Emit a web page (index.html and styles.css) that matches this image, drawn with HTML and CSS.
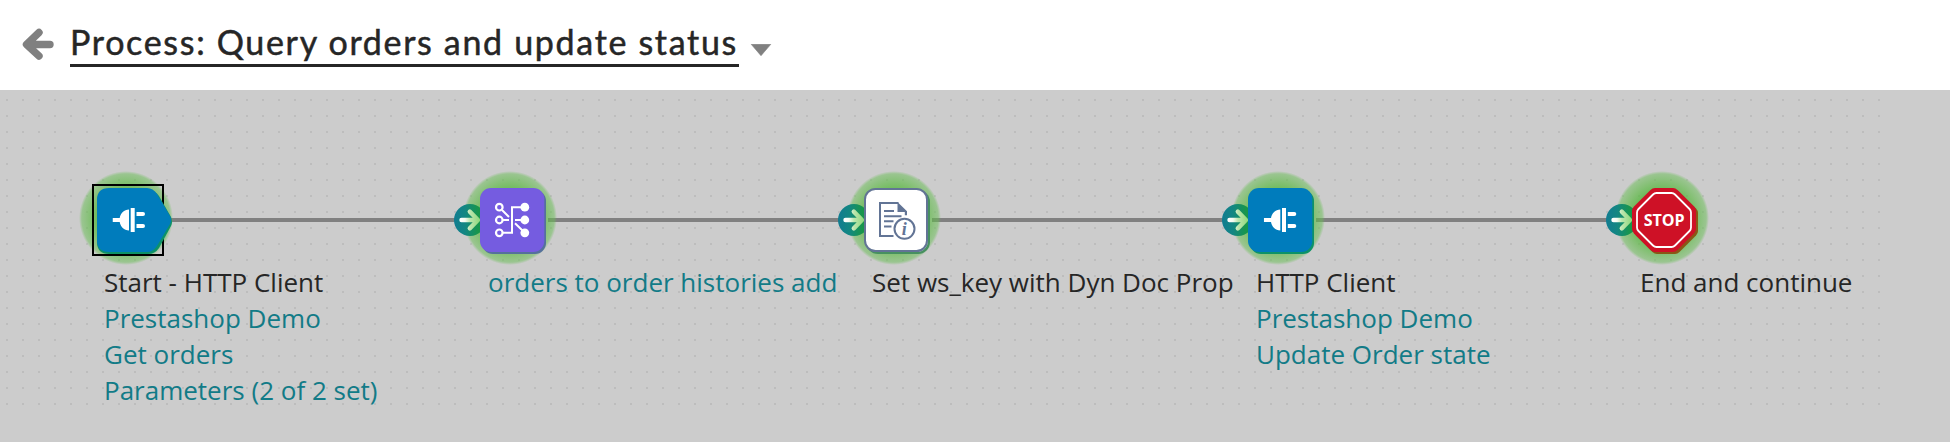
FILE: index.html
```html
<!DOCTYPE html>
<html lang="en">
<head>
<meta charset="utf-8">
<title>Process: Query orders and update status</title>
<link rel="stylesheet" href="styles.css">
</head>
<body>
<svg class="defs" width="0" height="0" aria-hidden="true">
  <defs>
    <linearGradient id="port-bg" x1="0" x2="1" y1="0" y2="0"><stop offset="0" stop-color="#117c91"/><stop offset=".35" stop-color="#138782"/><stop offset=".75" stop-color="#18964b"/><stop offset="1" stop-color="#18964b"/></linearGradient>
    <linearGradient id="port-arrow" gradientUnits="userSpaceOnUse" x1="6" x2="26" y1="16" y2="16"><stop offset="0" stop-color="#fff"/><stop offset=".25" stop-color="#f4fbf0"/><stop offset=".5" stop-color="#bde6ae"/><stop offset="1" stop-color="#8fd87c"/></linearGradient>
    <symbol id="port" viewBox="0 0 32 32">
      <circle cx="16" cy="16" r="16" fill="url(#port-bg)"/>
      <path d="M7.5 16H23.5M15.8 7.6L24 16L15.8 24.4" fill="none" stroke="url(#port-arrow)" stroke-width="4.4" stroke-linecap="round" stroke-linejoin="round"/>
    </symbol>
    <symbol id="plug" viewBox="0 0 34 26">
      <g fill="#fff"><path d="M0 11h7.2C8 6.200 11.500 2.500 16.500 2.500v21C11.500 23.500 8 19.800 7.200 15H0z"/><path d="M18.200 1h4v24h-4z"/><path d="M24 5h6.500a2 2 0 0 1 0 4H24zM24 17h6.500a2 2 0 0 1 0 4H24z"/></g>
    </symbol>
  </defs>
</svg>
<header class="header">
  <svg class="back" width="32" height="34" viewBox="0 0 32 34"><path d="M4.500 16.500L17 4.500M4.500 16.500L17 28M6 16.500H28" fill="none" stroke="#808080" stroke-width="7.400" stroke-linecap="round" stroke-linejoin="round"/></svg>
  <h1 class="title">Process: Query orders and update status</h1>
  <svg class="caret" width="22" height="12" viewBox="0 0 22 12"><path d="M1.200.300h19.600L11 11.700z" fill="#808080" stroke="#808080" stroke-width=".6" stroke-linejoin="round"/></svg>
</header>
<main class="canvas">
  <div class="grid"></div>

  <section class="node node-start">
    <div class="link"></div>
    <div class="glow"></div>
    <div class="selection"></div>
    <svg class="shape" width="80" height="68" viewBox="0 0 80 68">
      <path d="M13 2H52Q59 2 63 8L75 29Q77 34 75 38L63 60Q59 66 52 66H13Q1 66 1 54V14Q1 2 13 2Z" fill="#0d9268"/>
      <path d="M13 0H51Q57 0 61 6L74 28Q76 32 74 36L61 58Q57 64 51 64H13Q1 64 1 52V12Q1 0 13 0Z" fill="#007cbc"/>
      <use href="#plug" x="16.500" y="19" width="34" height="26"/>
    </svg>
    <div class="label"><span>Start - HTTP Client</span><a>Prestashop Demo</a><a>Get orders</a><a>Parameters (2 of 2 set)</a></div>
  </section>

  <section class="node node-map">
    <div class="link"></div>
    <div class="glow"></div>
    <svg class="port" width="32" height="32"><use href="#port"/></svg>
    <svg class="shape" width="68" height="68" viewBox="0 0 68 68">
      <rect x="2" y="2" width="64" height="64" rx="11" fill="#55709c"/>
      <rect width="64.300" height="64" rx="11" fill="#755ce0"/>
      <g fill="none" stroke="#fff" stroke-width="2">
        <circle cx="19.300" cy="19.200" r="3.300" stroke-width="2.200"/><circle cx="19.300" cy="32" r="3.300" stroke-width="2.200"/><circle cx="19.300" cy="44.800" r="3.300" stroke-width="2.200"/>
        <path d="M22 22L29 29M23 32H29M23 44.800H32V19.200H42M35 32H44M35 35.200L44 44"/>
      </g>
      <g fill="#fff"><circle cx="44.800" cy="19.200" r="4.400"/><circle cx="44.800" cy="32" r="4.400"/><circle cx="44.800" cy="44.800" r="4.400"/></g>
    </svg>
    <div class="label"><a>orders to order histories add</a></div>
  </section>

  <section class="node node-props">
    <div class="link"></div>
    <div class="glow"></div>
    <svg class="port" width="32" height="32"><use href="#port"/></svg>
    <svg class="shape" width="68" height="68" viewBox="0 0 68 68">
      <rect x="2" y="2" width="64" height="64" rx="12" fill="#479060"/>
      <rect x="3.500" y="3.500" width="60.500" height="60.500" rx="11" fill="#b5cfc0"/>
      <rect x="1" y="1" width="62" height="62" rx="10.500" fill="#fff" stroke="#627495" stroke-width="2"/>
      <g fill="none" stroke="#627495" stroke-width="2">
        <path d="M29.500 48H16V15H34.500"/>
        <path d="M20 23H30M20 28.200H37.500M20 33.300H29.500M20 38.600H27.500"/>
        <circle cx="40.500" cy="40.800" r="10" fill="#fff"/>
      </g>
      <path d="M33.500 14L43 23.200V27.200H40.800V24H33.500z" fill="#627495"/>
      <text class="info" x="40.300" y="46.500">i</text>
    </svg>
    <div class="label"><span>Set ws_key with Dyn Doc Prop</span></div>
  </section>

  <section class="node node-http">
    <div class="link"></div>
    <div class="glow"></div>
    <svg class="port" width="32" height="32"><use href="#port"/></svg>
    <svg class="shape" width="68" height="68" viewBox="0 0 68 68">
      <rect x="2" y="2" width="64" height="64" rx="11" fill="#0d9268"/>
      <rect width="64.300" height="64" rx="11" fill="#007cbc"/>
      <use href="#plug" x="15.800" y="19" width="34" height="26"/>
    </svg>
    <div class="label"><span>HTTP Client</span><a>Prestashop Demo</a><a>Update Order state</a></div>
  </section>

  <section class="node node-stop">
    <div class="glow"></div>
    <svg class="port" width="32" height="32"><use href="#port"/></svg>
    <svg class="shape" width="68" height="68" viewBox="0 0 68 68">
      <path d="M23 0H41Q43.500 0 45.500 2L62 18.500Q64 20.500 64 23V41Q64 43.500 62 45.500L45.500 62Q43.500 64 41 64H23Q20.500 64 18.500 62L2 45.500Q0 43.500 0 41V23Q0 20.500 2 18.500L18.500 2Q20.500 0 23 0Z" transform="translate(2 2)" fill="#8a5715"/>
      <path d="M23 0H41Q43.500 0 45.500 2L62 18.500Q64 20.500 64 23V41Q64 43.500 62 45.500L45.500 62Q43.500 64 41 64H23Q20.500 64 18.500 62L2 45.500Q0 43.500 0 41V23Q0 20.500 2 18.500L18.500 2Q20.500 0 23 0Z" fill="#ce1126"/>
      <path d="M24.500 5H39.500Q41.500 5 43 6.500L57.500 21Q59 22.500 59 24.500V39.500Q59 41.500 57.500 43L43 57.500Q41.500 59 39.500 59H24.500Q22.500 59 21 57.500L6.500 43Q5 41.500 5 39.500V24.500Q5 22.500 6.500 21L21 6.500Q22.500 5 24.500 5Z" fill="none" stroke="#fff" stroke-width="1.800"/>
      <text class="stop" x="32.200" y="37.500" textLength="41" lengthAdjust="spacingAndGlyphs">STOP</text>
    </svg>
    <div class="label"><span>End and continue</span></div>
  </section>
</main>
</body>
</html>
```

FILE: styles.css
```css
* { box-sizing: border-box; }
html { height: 442px; overflow: hidden; }
body {
  margin: 0;
  height: 442px;
  display: flex;
  flex-direction: column;
  overflow: hidden;
  background: #ccc;
  color: #262626;
  font-family: "Open Sans", "Noto Sans", sans-serif;
}
.defs { position: absolute; }
.header {
  height: 90px;
  flex: none;
  display: flex;
  align-items: flex-start;
  padding-left: 22px;
  background: #fff;
}
.back { margin-top: 28px; }
.title {
  margin: 23px 11px 0 16px;
  width: 669px;
  height: 44px;
  border-bottom: 3px solid #262626;
  font: 400 34px/38px Lato, sans-serif;
  letter-spacing: 1.68px;
  padding-left: 0;
  white-space: nowrap;
  -webkit-text-stroke: .5px #262626;
}
.caret { margin-top: 44px; }
.canvas { position: relative; flex: 1; }
.grid {
  width: 1888px;
  height: 324px;
  background: conic-gradient(from 0deg at 2px 2px, transparent 270deg, #bdbdbd 270deg) 6px 9px / 16px 16px;
}
.node { position: absolute; top: 98px; width: 384px; }
.node-start { left: 96px; }
.node-map { left: 480px; }
.node-props { left: 864px; }
.node-http { left: 1248px; }
.node-stop { left: 1632px; }
.link {
  position: absolute;
  left: 68px;
  top: 30px;
  width: 292px;
  height: 4px;
  background: #808080;
}
.glow {
  position: absolute;
  left: -17px;
  top: -17px;
  width: 94px;
  height: 94px;
  border-radius: 50%;
  background: radial-gradient(circle closest-side, rgba(70, 178, 45, .8) 50%, rgba(90, 185, 65, .65) 75%, rgba(105, 190, 85, .5) 94%, rgba(120, 190, 100, 0) 100%);
}
.selection {
  position: absolute;
  left: -4px;
  top: -4px;
  width: 72px;
  height: 72px;
  border: 2px solid #000;
}
.port { position: absolute; left: -26px; top: 16px; }
.shape { position: relative; display: block; }
.label {
  display: flex;
  flex-direction: column;
  margin: 8px 0 0 8px;
  font-size: 26px;
  line-height: 36px;
  white-space: nowrap;
}
.label a { color: #127b87; }
.info {
  font: italic bold 18px "Liberation Serif", serif;
  fill: #627495;
  text-anchor: middle;
}
.stop {
  font: bold 16px "Open Sans", sans-serif;
  fill: #fff;
  text-anchor: middle;
}
```
